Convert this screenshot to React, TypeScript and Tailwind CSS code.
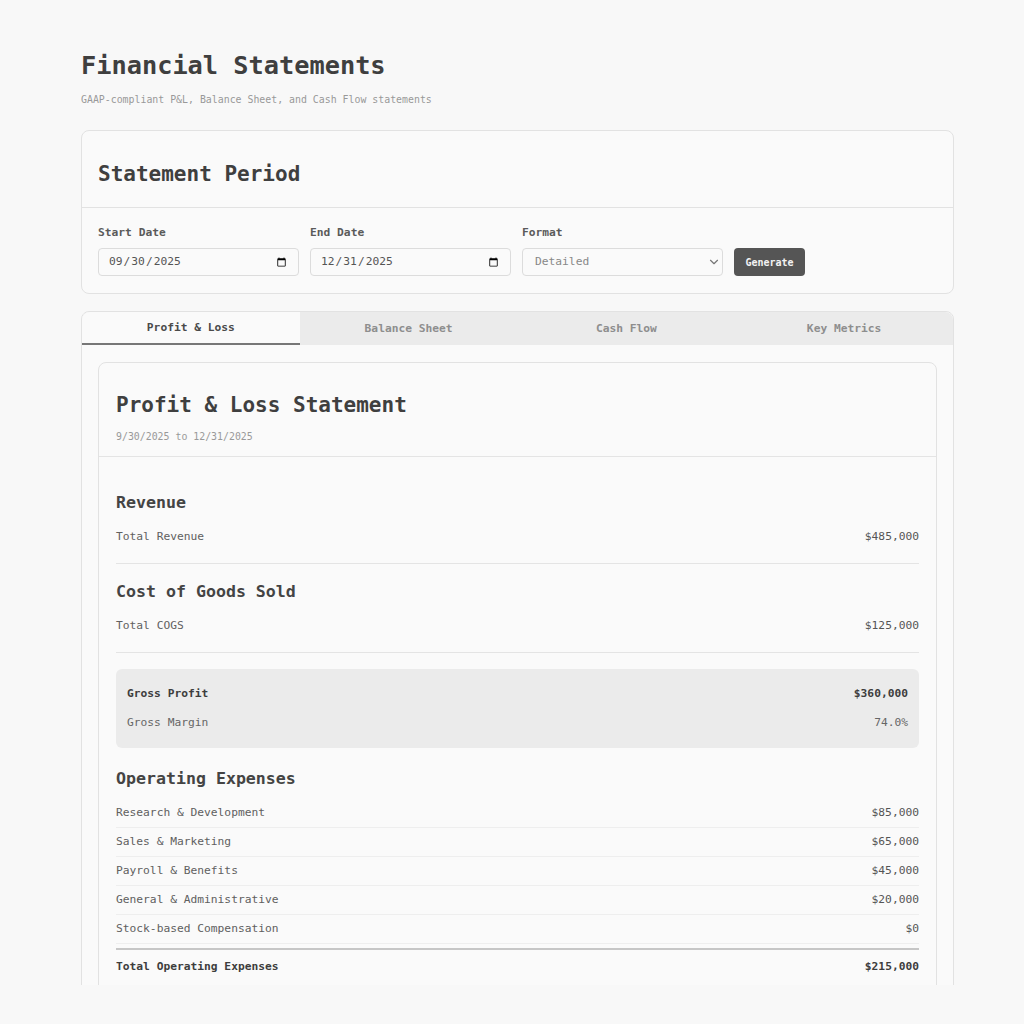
import { ChevronDown } from 'lucide-react';

const MONO = "font-['DejaVu_Sans_Mono','Liberation_Mono',monospace]";

const tabs = ['Profit & Loss', 'Balance Sheet', 'Cash Flow', 'Key Metrics'];

const opex = [
  ['Research & Development', '$85,000'],
  ['Sales & Marketing', '$65,000'],
  ['Payroll & Benefits', '$45,000'],
  ['General & Administrative', '$20,000'],
  ['Stock-based Compensation', '$0'],
];

function Field({ label, children }: { label: string; children: React.ReactNode }) {
  return (
    <div className="flex w-[201px] flex-col gap-[7px]">
      <label className="text-[11.25px] leading-[16px] font-semibold text-[#5a5a5a]">{label}</label>
      {children}
    </div>
  );
}

function Row({ label, value }: { label: string; value: string }) {
  return (
    <div className="flex h-[28px] items-center justify-between text-[11.25px]">
      <span className="text-[#606060]">{label}</span>
      <span className="text-[#555]">{value}</span>
    </div>
  );
}

function Section({ title, label, value }: { title: string; label: string; value: string }) {
  return (
    <div className="border-b border-[#e4e4e4] pt-[17px] pb-[12px]">
      <h3 className="text-[16.6px] leading-[22px] font-semibold text-[#444]">{title}</h3>
      <div className="mt-[9px]">
        <Row label={label} value={value} />
      </div>
    </div>
  );
}

export default function App() {
  return (
    <div className={`min-h-screen bg-[#f8f8f8] ${MONO}`}>
      <div className="h-[985px] overflow-hidden pl-[81px] pt-[50px]">
        <div className="w-[873px]">
          <h1 className="text-[25.3px] leading-[31px] font-semibold text-[#3f3f3f]">Financial Statements</h1>
          <p className="mt-[12px] text-[9.9px] leading-[14px] text-[#999]">
            GAAP-compliant P&amp;L, Balance Sheet, and Cash Flow statements
          </p>

          <div className="mt-[23px] rounded-[8px] border border-[#e2e2e2] bg-[#fafafa]">
            <div className="border-b border-[#e2e2e2] px-[16px] pt-[31px] pb-[20px]">
              <h2 className="text-[21px] leading-[25px] font-semibold text-[#3f3f3f]">Statement Period</h2>
            </div>
            <div className="flex items-end gap-[11px] px-[16px] pt-[17px] pb-[17px]">
              <Field label="Start Date">
                <input
                  type="date"
                  defaultValue="2025-09-30"
                  className="h-[28px] w-full rounded-[4px] border border-[#dcdcdc] bg-[#fafafa] px-[9px] text-[11.25px] text-[#555]"
                />
              </Field>
              <Field label="End Date">
                <input
                  type="date"
                  defaultValue="2025-12-31"
                  className="h-[28px] w-full rounded-[4px] border border-[#dcdcdc] bg-[#fafafa] px-[9px] text-[11.25px] text-[#555]"
                />
              </Field>
              <Field label="Format">
                <div className="relative">
                  <select
                    defaultValue="detailed"
                    className="h-[28px] w-full appearance-none rounded-[4px] border border-[#dcdcdc] bg-[#fafafa] px-[12px] text-[11.25px] text-[#888]"
                  >
                    <option value="detailed">Detailed</option>
                    <option value="summary">Summary</option>
                  </select>
                  <ChevronDown className="pointer-events-none absolute top-[7px] right-[2px] h-[14px] w-[14px] text-[#777]" />
                </div>
              </Field>
              <button className="h-[28px] w-[71px] rounded-[4px] bg-[#555] text-[10px] font-semibold text-[#f2f2f2]">
                Generate
              </button>
            </div>
          </div>

          <div className="mt-[17px] rounded-[8px] border border-[#e2e2e2] bg-[#fafafa]">
            <div className="flex h-[33px] rounded-t-[8px] bg-[#ebebeb]">
              {tabs.map((t, i) => (
                <div
                  key={t}
                  className={
                    i === 0
                      ? 'flex flex-1 items-center justify-center rounded-tl-[8px] border-b-2 border-[#777] bg-[#fafafa] text-[11.25px] font-semibold text-[#4a4a4a]'
                      : 'flex flex-1 items-center justify-center text-[11.25px] font-semibold text-[#8e8e8e]'
                  }
                >
                  {t}
                </div>
              ))}
            </div>

            <div className="px-[16px] pt-[17px]">
              <div className="rounded-[8px] border border-[#e2e2e2] bg-[#fafafa]">
                <div className="border-b border-[#e4e4e4] px-[17px] pt-[30px] pb-[12px]">
                  <h2 className="text-[21px] leading-[25px] font-semibold text-[#3f3f3f]">Profit &amp; Loss Statement</h2>
                  <p className="mt-[12px] text-[9.9px] leading-[14px] text-[#999]">9/30/2025 to 12/31/2025</p>
                </div>

                <div className="px-[17px] pt-[18px] pb-[24px]">
                  <Section title="Revenue" label="Total Revenue" value="$485,000" />
                  <Section title="Cost of Goods Sold" label="Total COGS" value="$125,000" />

                  <div className="mt-[16px] rounded-[6px] bg-[#ebebeb] px-[11px] pt-[11px] pb-[11px]">
                    <div className="flex h-[28px] items-center justify-between text-[11.25px] font-semibold text-[#3d3d3d]">
                      <span>Gross Profit</span>
                      <span>$360,000</span>
                    </div>
                    <div className="mt-[1px] flex h-[28px] items-center justify-between text-[11.25px] text-[#666]">
                      <span>Gross Margin</span>
                      <span>74.0%</span>
                    </div>
                  </div>

                  <h3 className="mt-[20px] text-[16.6px] leading-[22px] font-semibold text-[#444]">Operating Expenses</h3>
                  <div className="mt-[9px]">
                    {opex.map(([l, v]) => (
                      <div key={l} className="border-b border-[#eeeeee]">
                        <Row label={l} value={v} />
                      </div>
                    ))}
                  </div>
                  <div className="mt-[4px] border-t-2 border-[#c6c6c6] pt-[3px]">
                    <div className="flex h-[28px] items-center justify-between text-[11.25px] font-semibold text-[#3d3d3d]">
                      <span>Total Operating Expenses</span>
                      <span>$215,000</span>
                    </div>
                  </div>
                </div>
              </div>
            </div>
          </div>
        </div>
      </div>
    </div>
  );
}
